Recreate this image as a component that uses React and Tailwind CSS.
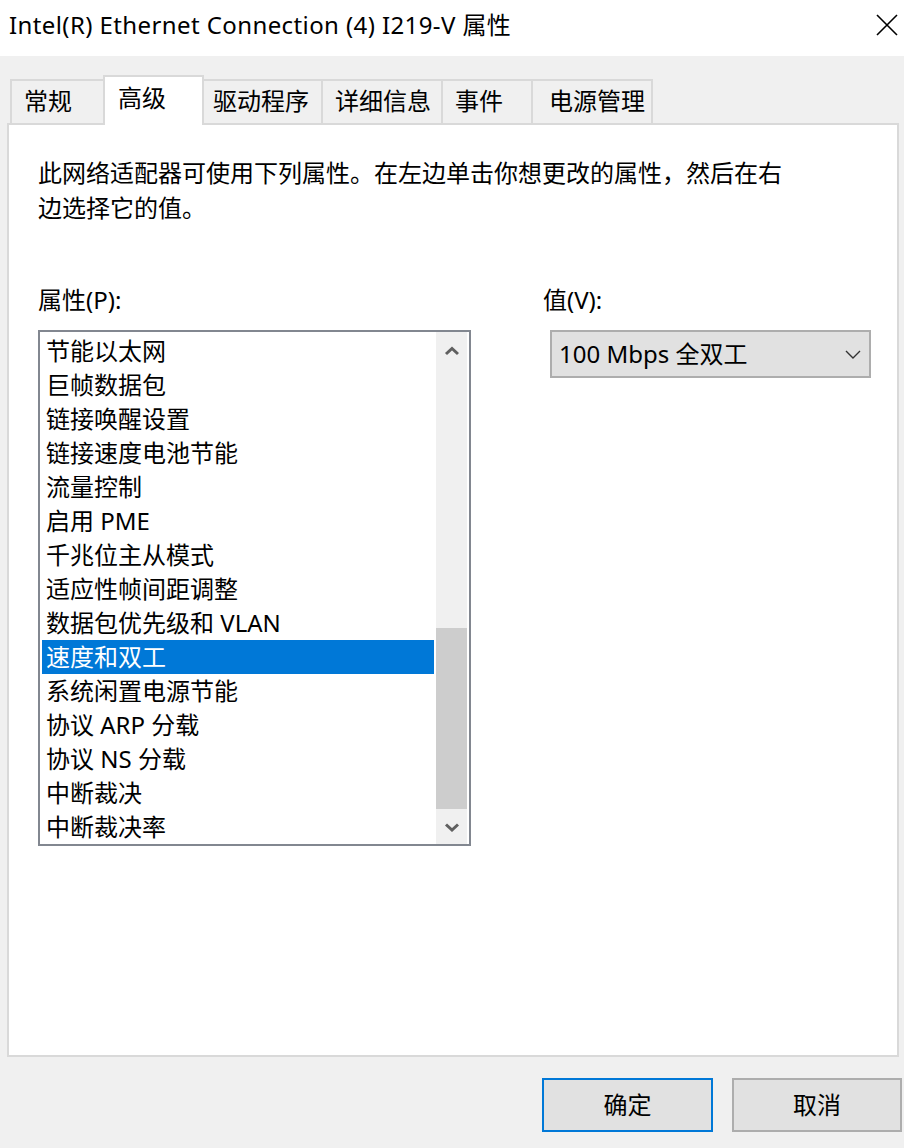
import React from 'react';

const items = [
  '节能以太网',
  '巨帧数据包',
  '链接唤醒设置',
  '链接速度电池节能',
  '流量控制',
  '启用 PME',
  '千兆位主从模式',
  '适应性帧间距调整',
  '数据包优先级和 VLAN',
  '速度和双工',
  '系统闲置电源节能',
  '协议 ARP 分载',
  '协议 NS 分载',
  '中断裁决',
  '中断裁决率',
];

const tabs = [
  { label: '常规', w: 'w-[93px]', pl: 'pl-[12px]' },
  { label: '高级', w: 'w-[101px]', pl: 'pl-[13px]', active: true },
  { label: '驱动程序', w: 'w-[117px]', pl: 'pl-[9px]' },
  { label: '详细信息', w: 'w-[120px]', pl: 'pl-[12px]' },
  { label: '事件', w: 'w-[90px]', pl: 'pl-[12px]' },
  { label: '电源管理', w: 'w-[122px]', pl: 'pl-[16px]', last: true },
];

function Chevron({ down, className }) {
  return (
    <svg width="16" height="10" viewBox="0 0 16 10" className={className}>
      <path
        d={down ? 'M2 2.5 L8 8 L14 2.5' : 'M2 8 L8 2.5 L14 8'}
        fill="none"
        stroke="#606060"
        strokeWidth="3"
      />
    </svg>
  );
}

export default function App() {
  const selected = 9;

  return (
    <div className="w-[904px] h-[1148px] flex flex-col bg-[#f0f0f0] overflow-hidden text-black font-['Noto_Sans','Noto_Sans_CJK_SC',sans-serif]">
      {/* Title bar */}
      <div className="h-[56px] bg-white flex items-center justify-between pl-[9px] pr-[6px] pb-[6px] shrink-0">
        <span className="text-[24px] leading-none tracking-[0.4px]">Intel(R) Ethernet Connection (4) I219-V 属性</span>
        <svg width="22" height="22" viewBox="0 0 22 22">
          <path d="M1 1 L21 21 M21 1 L1 21" stroke="#000" strokeWidth="1.6" />
        </svg>
      </div>

      {/* Tabs */}
      <div className="flex items-end pl-[10px] pt-[19px] shrink-0">
        {tabs.map((t, i) => {
          const afterActive = i > 0 && tabs[i - 1].active;
          if (t.active) {
            return (
              <div
                key={t.label}
                className={`${t.w} ${t.pl} relative z-10 h-[50px] -mb-[2px] bg-white border-2 border-b-0 border-[#d9d9d9] pt-[4px] text-[24px] leading-[34px]`}
              >
                {t.label}
              </div>
            );
          }
          return (
            <div
              key={t.label}
              className={`${t.w} ${t.pl} h-[44px] bg-[#f0f0f0] border-t-2 border-[#d9d9d9] ${afterActive ? '' : 'border-l-2'} ${t.last ? 'border-r-2' : ''} pt-[3px] text-[24px] leading-[34px]`}
            >
              {t.label}
            </div>
          );
        })}
      </div>

      {/* Panel */}
      <div className="ml-[7px] w-[892px] h-[934px] bg-white border-2 border-[#d9d9d9] shrink-0 pl-[29px] pt-[30px]">
        <p className="text-[24px] leading-[35px]">
          此网络适配器可使用下列属性。在左边单击你想更改的属性，然后在右
          <br />
          边选择它的值。
        </p>

        <div className="flex mt-[57px]">
          {/* Left column */}
          <div className="w-[433px] flex flex-col">
            <div className="text-[24px] leading-[35px] h-[35px]">属性(P):</div>
            <div className="mt-[13px] h-[516px] border-2 border-[#828790] flex pr-[2px]">
              <div className="flex-1 flex flex-col pt-[2px] px-[2px]">
                {items.map((it, i) => (
                  <div
                    key={it}
                    className={`h-[34px] shrink-0 pl-[4px] text-[24px] leading-[34px] whitespace-nowrap ${
                      i === selected ? 'bg-[#0078d7] text-white' : ''
                    }`}
                  >
                    {it}
                  </div>
                ))}
              </div>
              {/* Scrollbar */}
              <div className="w-[31px] bg-[#f0f0f0] flex flex-col">
                <div className="h-[36px] flex items-center justify-center pt-[2px]">
                  <Chevron />
                </div>
                <div className="h-[260px]" />
                <div className="h-[181px] bg-[#cdcdcd]" />
                <div className="flex-1 flex items-center justify-center">
                  <Chevron down />
                </div>
              </div>
            </div>
          </div>

          {/* Right column */}
          <div className="ml-[72px] flex flex-col">
            <div className="text-[24px] leading-[35px] h-[35px]">值(V):</div>
            <div className="mt-[13px] ml-[7px] w-[321px] h-[48px] bg-[#e1e1e1] border-2 border-[#adadad] flex items-center justify-between pl-[7px] pr-[8px]">
              <span className="text-[24px] leading-none">100 Mbps 全双工</span>
              <svg width="16" height="9" viewBox="0 0 16 9">
                <path d="M1 1 L8 8 L15 1" fill="none" stroke="#333" strokeWidth="1.4" />
              </svg>
            </div>
          </div>
        </div>
      </div>

      {/* Buttons */}
      <div className="flex justify-end gap-[19px] pr-[2px] mt-[21px]">
        <button className="w-[171px] h-[54px] bg-[#e1e1e1] border-2 border-[#0078d7] text-[24px]">确定</button>
        <button className="w-[170px] h-[54px] bg-[#e1e1e1] border-2 border-[#adadad] text-[24px]">取消</button>
      </div>
    </div>
  );
}
